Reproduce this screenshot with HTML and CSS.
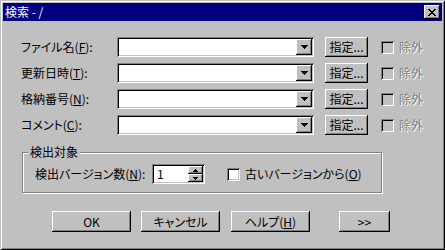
FILE: index.html
```html
<!DOCTYPE html>
<html lang="ja">
<head>
  <meta charset="UTF-8">
  <title>検索 - /</title>
  <link rel="stylesheet" href="styles.css">
</head>
<body>
  <div class="window">
    <div class="titlebar">
      <span class="title">検索 - /</span>
      <button class="close" aria-label="閉じる">
        <svg width="8" height="7" viewBox="0 0 8 7" shape-rendering="crispEdges">
          <path fill="#000" d="M0 0h2v1H0zM6 0h2v1H6zM1 1h2v1H1zM5 1h2v1H5zM2 2h4v1H2zM3 3h2v1H3zM2 4h4v1H2zM1 5h2v1H1zM5 5h2v1H5zM0 6h2v1H0zM6 6h2v1H6z"/>
        </svg>
      </button>
    </div>

    <div class="content">
      <div class="fields">
        <div class="row">
          <label class="label">ファイル名(<u>F</u>):</label>
          <div class="combo">
            <span class="combo-value"></span>
            <span class="drop"><svg width="7" height="4" viewBox="0 0 7 4" shape-rendering="crispEdges"><path fill="#000" d="M0 0h7v1H0zM1 1h5v1H1zM2 2h3v1H2zM3 3h1v1H3z"/></svg></span>
          </div>
          <button class="btn btn-pick">指定...</button>
          <label class="check disabled"><span class="box"></span><span>除外</span></label>
        </div>
        <div class="row">
          <label class="label">更新日時(<u>T</u>):</label>
          <div class="combo">
            <span class="combo-value"></span>
            <span class="drop"><svg width="7" height="4" viewBox="0 0 7 4" shape-rendering="crispEdges"><path fill="#000" d="M0 0h7v1H0zM1 1h5v1H1zM2 2h3v1H2zM3 3h1v1H3z"/></svg></span>
          </div>
          <button class="btn btn-pick">指定...</button>
          <label class="check disabled"><span class="box"></span><span>除外</span></label>
        </div>
        <div class="row">
          <label class="label">格納番号(<u>N</u>):</label>
          <div class="combo">
            <span class="combo-value"></span>
            <span class="drop"><svg width="7" height="4" viewBox="0 0 7 4" shape-rendering="crispEdges"><path fill="#000" d="M0 0h7v1H0zM1 1h5v1H1zM2 2h3v1H2zM3 3h1v1H3z"/></svg></span>
          </div>
          <button class="btn btn-pick">指定...</button>
          <label class="check disabled"><span class="box"></span><span>除外</span></label>
        </div>
        <div class="row">
          <label class="label">コメント(<u>C</u>):</label>
          <div class="combo">
            <span class="combo-value"></span>
            <span class="drop"><svg width="7" height="4" viewBox="0 0 7 4" shape-rendering="crispEdges"><path fill="#000" d="M0 0h7v1H0zM1 1h5v1H1zM2 2h3v1H2zM3 3h1v1H3z"/></svg></span>
          </div>
          <button class="btn btn-pick">指定...</button>
          <label class="check disabled"><span class="box"></span><span>除外</span></label>
        </div>
      </div>

      <fieldset class="group">
        <legend>検出対象</legend>
        <div class="group-row">
          <label class="label-wide">検出バージョン数(<u>N</u>):</label>
          <div class="spin">
            <span class="spin-value">1</span>
            <span class="spin-btns">
              <span class="spin-btn"><svg width="5" height="3" viewBox="0 0 5 3" shape-rendering="crispEdges"><path fill="#000" d="M2 0h1v1H2zM1 1h3v1H1zM0 2h5v1H0z"/></svg></span>
              <span class="spin-btn"><svg width="5" height="3" viewBox="0 0 5 3" shape-rendering="crispEdges"><path fill="#000" d="M0 0h5v1H0zM1 1h3v1H1zM2 2h1v1H2z"/></svg></span>
            </span>
          </div>
          <label class="check check-old"><span class="box"></span><span>古いバージョンから(<u>O</u>)</span></label>
        </div>
      </fieldset>

      <div class="actions">
        <button class="btn btn-ok">OK</button>
        <button class="btn btn-cancel">キャンセル</button>
        <button class="btn btn-help">ヘルプ(<u>H</u>)</button>
        <button class="btn btn-more">&gt;&gt;</button>
      </div>
    </div>
  </div>
</body>
</html>
```

FILE: styles.css
```css
* {
  margin: 0;
  padding: 0;
  box-sizing: border-box;
}

:root {
  --face: #c0c0c0;
  --light: #ffffff;
  --shadow: #808080;
  --dark: #000000;
  --title: #000080;
}

body {
  font-family: "Noto Sans CJK JP", sans-serif;
  font-size: 12px;
  font-feature-settings: "palt";
  color: #000;
  background: var(--face);
}

u {
  text-decoration-thickness: 1px;
  text-underline-offset: 1px;
}

.window {
  width: 445px;
  height: 250px;
  padding: 3px;
  background: var(--face);
  box-shadow:
    inset 1px 1px var(--face),
    inset -1px -1px var(--dark),
    inset 2px 2px var(--light),
    inset -2px -2px var(--shadow);
  display: flex;
  flex-direction: column;
}

/* title bar */
.titlebar {
  height: 18px;
  background: var(--title);
  color: #fff;
  display: flex;
  align-items: center;
  justify-content: space-between;
  padding: 0 2px 0 2px;
  line-height: 14px;
}

.close {
  width: 16px;
  height: 14px;
  border: none;
  background: var(--face);
  display: flex;
  align-items: center;
  justify-content: center;
  box-shadow:
    inset -1px -1px var(--dark),
    inset 1px 1px var(--light),
    inset -2px -2px var(--shadow);
}

/* shared controls */
.btn {
  border: none;
  background: var(--face);
  font-family: inherit;
  font-size: 12px;
  font-feature-settings: "palt";
  color: #000;
  height: 20px;
  line-height: 14px;
  box-shadow:
    inset -1px -1px var(--dark),
    inset 1px 1px var(--light),
    inset -2px -2px var(--shadow);
}

.content {
  flex: 1;
  padding: 16px 0 0 18px;
  display: flex;
  flex-direction: column;
}

/* search fields */
.fields {
  display: flex;
  flex-direction: column;
  gap: 6px;
}

.row {
  height: 20px;
  display: flex;
  align-items: center;
}

.label {
  width: 96px;
  line-height: 14px;
}

.combo {
  width: 197px;
  height: 20px;
  padding: 2px;
  background: #fff;
  display: flex;
  justify-content: space-between;
  box-shadow:
    inset 1px 1px var(--shadow),
    inset -1px -1px var(--light),
    inset 2px 2px var(--dark),
    inset -2px -2px var(--face);
}

.drop {
  width: 16px;
  height: 16px;
  background: var(--face);
  display: flex;
  align-items: center;
  justify-content: center;
  box-shadow:
    inset -1px -1px var(--dark),
    inset 1px 1px var(--light),
    inset -2px -2px var(--shadow);
}

.btn-pick {
  width: 43px;
  margin-left: 11px;
}

.check {
  display: flex;
  align-items: center;
  gap: 5px;
  line-height: 14px;
  margin-left: 13px;
}

.box {
  width: 13px;
  height: 13px;
  background: #fff;
  box-shadow:
    inset 1px 1px var(--shadow),
    inset -1px -1px var(--light),
    inset 2px 2px var(--dark),
    inset -2px -2px var(--face);
}

.check.disabled {
  color: var(--shadow);
  text-shadow: 1px 1px var(--light);
}

.check.disabled .box {
  background: var(--face);
}

/* group box */
.group {
  width: 360px;
  margin: 10px 0 0 1px;
  padding: 5px 0 8px 12px;
  border: 1px solid var(--shadow);
  box-shadow: inset 1px 1px var(--light), 1px 1px var(--light);
}

.group legend {
  margin-left: -7px;
  padding: 0 2px;
  line-height: 14px;
  background: var(--face);
}

.group-row {
  display: flex;
  align-items: center;
  height: 20px;
}

.label-wide {
  width: 117px;
  line-height: 14px;
}

.spin {
  width: 53px;
  height: 20px;
  padding: 2px;
  background: #fff;
  display: flex;
  justify-content: space-between;
  box-shadow:
    inset 1px 1px var(--shadow),
    inset -1px -1px var(--light),
    inset 2px 2px var(--dark),
    inset -2px -2px var(--face);
}

.spin-value {
  padding-left: 3px;
  line-height: 16px;
}

.spin-btns {
  width: 15px;
  display: flex;
  flex-direction: column;
}

.spin-btn {
  flex: 1;
  background: var(--face);
  display: flex;
  align-items: center;
  justify-content: center;
  box-shadow:
    inset -1px -1px var(--dark),
    inset 1px 1px var(--light),
    inset -2px -2px var(--shadow);
}

.check-old {
  margin-left: 22px;
}

/* dialog buttons */
.actions {
  display: flex;
  margin: 18px 0 0 31px;
}

.actions .btn {
  height: 21px;
}

.btn-ok,
.btn-cancel,
.btn-help {
  width: 79px;
}

.btn-cancel {
  margin-left: 10px;
}

.btn-help {
  margin-left: 11px;
}

.btn-more {
  width: 51px;
  margin-left: 29px;
}
```
